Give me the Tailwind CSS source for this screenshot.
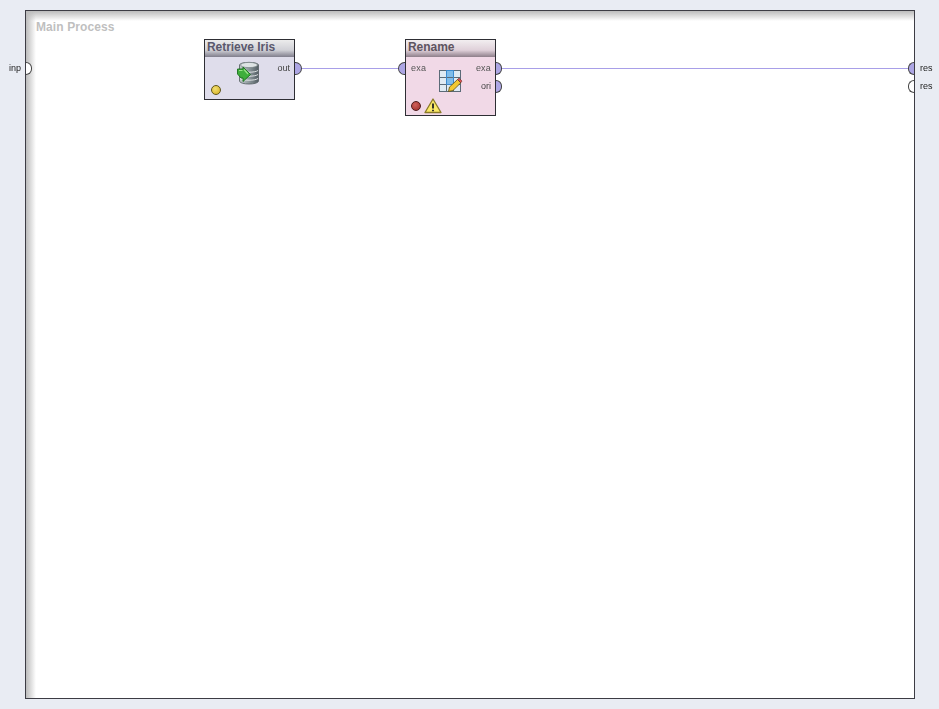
<!DOCTYPE html>
<html lang="en">
  <head>
    <meta charset="UTF-8" />
    <title>Main Process</title>
    <script src="https://cdn.jsdelivr.net/npm/@tailwindcss/browser@4"></script>
  </head>
  <body class="w-[939px] h-[709px] overflow-hidden bg-[#e9ecf3] font-['Liberation_Sans',sans-serif]">
    <div class="relative w-[939px] h-[709px] pt-[10px] pl-[25px] opacity-[0.999]">
      <!-- process frame -->
      <div class="relative w-[890px] h-[689px] border border-[#3c3c44] bg-white">
        <div class="absolute inset-x-0 top-0 h-[10px] bg-gradient-to-b from-[#bcbcbc] to-white"></div>
        <div class="absolute inset-y-0 left-0 w-[10px] bg-gradient-to-r from-[#bcbcbc] to-white/0"></div>
        <div class="absolute left-[10px] top-[8px] text-[12px] leading-[16px] tracking-[0.1px] font-bold text-[#bfbfbf]">Main Process</div>
      </div>

      <!-- connections -->
      <div class="absolute left-[301px] top-[68px] w-[100px] h-px bg-[#a89fe8]"></div>
      <div class="absolute left-[502px] top-[68px] w-[408px] h-px bg-[#a89fe8]"></div>

      <!-- process ports -->
      <span class="absolute left-[9px] top-[62px] text-[9px] leading-[12px] text-[#222]">inp</span>
      <div class="absolute left-[26px] top-[62px] w-[6px] h-[13px] rounded-r-full border border-l-0 border-[#444] bg-white"></div>
      <div class="absolute left-[908px] top-[62px] w-[6px] h-[13px] rounded-l-full border border-r-0 border-[#444] bg-[#ada6e4]"></div>
      <span class="absolute left-[920px] top-[62px] text-[9px] leading-[12px] text-[#222]">res</span>
      <div class="absolute left-[908px] top-[80px] w-[6px] h-[13px] rounded-l-full border border-r-0 border-[#444] bg-white"></div>
      <span class="absolute left-[920px] top-[80px] text-[9px] leading-[12px] text-[#222]">res</span>

      <!-- Retrieve Iris -->
      <div class="absolute left-[204px] top-[39px] w-[91px] h-[61px] border border-[#2e2e34] bg-[#dfddeb]">
        <div class="h-[17px] pl-[2px] bg-gradient-to-b from-[#ececec] via-[#d0d0d6] via-60% to-[#807e8c] text-[12px] leading-[15px] tracking-[-0.05px] font-bold text-[#5a586c]">Retrieve Iris</div>
        <span class="absolute right-[4px] top-[22px] text-[9px] leading-[12px] text-[#444]">out</span>
        <svg class="absolute left-[32px] top-[21px]" width="24" height="25" viewBox="0 0 24 25">
          <defs>
            <linearGradient id="db" x1="0" x2="1" y1="0" y2="0">
              <stop offset="0" stop-color="#c2cacc" />
              <stop offset="0.45" stop-color="#939ea2" />
              <stop offset="1" stop-color="#525d63" />
            </linearGradient>
          </defs>
          <path d="M2.500 4C2.500 0.500 21.500 0.500 21.500 4V20C21.500 24 2.500 24 2.500 20Z" fill="url(#db)" stroke="#5c666a" stroke-width="0.9" />
          <ellipse cx="12" cy="4" rx="8.500" ry="2.600" fill="#dde3e4" stroke="#7c868a" stroke-width="0.7" />
          <path d="M3 9.500C6 11.800 18 11.800 21 9.500M3 13.500C6 15.800 18 15.800 21 13.500M3 17.500C6 19.800 18 19.800 21 17.500" fill="none" stroke="#e8ecec" stroke-width="0.9" />
          <path d="M0.500 8H6V6L13.500 13.500L6 20.500V17H4L0.500 13Z" fill="#3fae3c" stroke="#1a6f1c" stroke-width="0.9" stroke-linejoin="round" />
          <path d="M7 8.500L11 13" fill="none" stroke="#98e486" stroke-width="1.200" />
          <path d="M2 9.500H5.500" fill="none" stroke="#98e486" stroke-width="1" />
        </svg>
        <div class="absolute left-[6px] top-[45px] w-[10px] h-[10px] rounded-full border border-[#5f5518] bg-[radial-gradient(circle_at_40%_35%,#f2df70,#d4ae20)]"></div>
      </div>
      <div class="absolute left-[295px] top-[62px] w-[7px] h-[13px] rounded-r-full border border-l-0 border-[#444] bg-[#ada6e4]"></div>

      <!-- Rename -->
      <div class="absolute left-[405px] top-[39px] w-[91px] h-[77px] border border-[#2e2e34] bg-[#f1d9e7]">
        <div class="h-[17px] pl-[2px] bg-gradient-to-b from-[#f2eef0] via-[#dfd0d9] via-60% to-[#8e7f8a] text-[12px] leading-[15px] tracking-[-0.05px] font-bold text-[#5e5460]">Rename</div>
        <span class="absolute left-[5px] top-[22px] text-[9px] leading-[12px] tracking-[0.2px] text-[#555]">exa</span>
        <span class="absolute right-[4px] top-[22px] text-[9px] leading-[12px] tracking-[0.2px] text-[#555]">exa</span>
        <span class="absolute right-[4px] top-[40px] text-[9px] leading-[12px] text-[#444]">ori</span>
        <svg class="absolute left-[33px] top-[30px]" width="24" height="24" viewBox="0 0 24 24">
          <rect x="0.500" y="0.500" width="21" height="21" fill="#dfeaf3" stroke="#5b6b78" />
          <rect x="7.500" y="0.500" width="7" height="14" fill="#7fbcea" />
          <path d="M0.500 7.500H21.500M0.500 14.500H21.500M7.500 0.500V21.500M14.500 0.500V21.500" stroke="#5b6b78" fill="none" />
          <path d="M7.500 0.500H14.500V14.500H7.500Z" stroke="#3a8ad0" fill="none" />
          <path d="M9.500 21.500L10.500 17L18.500 9.500L21.800 12.800L14 20.500Z" fill="#f2c831" stroke="#5a4a10" stroke-width="0.8" />
          <path d="M18.500 9.500L20 8L23 11L21.800 12.800Z" fill="#d9534f" stroke="#5a2020" stroke-width="0.5" />
        </svg>
        <div class="absolute left-[5px] top-[61px] w-[10px] h-[10px] rounded-full border border-[#4e1a1a] bg-[radial-gradient(circle_at_40%_35%,#d0605a,#9c2a28)]"></div>
        <svg class="absolute left-[18px] top-[58px]" width="18" height="16" viewBox="0 0 18 16">
          <path d="M9 1L17 14.500H1Z" fill="#fbe968" stroke="#8a7a28" stroke-width="1.300" stroke-linejoin="round" />
          <path d="M9 5.500V10.500M9 11.800V13.300" stroke="#222" stroke-width="1.800" fill="none" />
        </svg>
      </div>
      <div class="absolute left-[398px] top-[62px] w-[7px] h-[13px] rounded-l-full border border-r-0 border-[#444] bg-[#ada6e4]"></div>
      <div class="absolute left-[496px] top-[62px] w-[6px] h-[13px] rounded-r-full border border-l-0 border-[#444] bg-[#ada6e4]"></div>
      <div class="absolute left-[496px] top-[80px] w-[6px] h-[13px] rounded-r-full border border-l-0 border-[#444] bg-[#ada6e4]"></div>
    </div>
  </body>
</html>
